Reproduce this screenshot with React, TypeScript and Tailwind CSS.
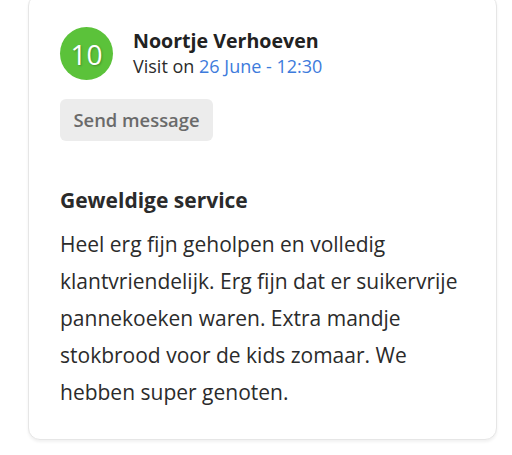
import React from 'react';

const review = {
  score: 10,
  name: 'Noortje Verhoeven',
  visit: '26 June - 12:30',
  title: 'Geweldige service',
  body: 'Heel erg fijn geholpen en volledig klantvriendelijk. Erg fijn dat er suikervrije pannekoeken waren. Extra mandje stokbrood voor de kids zomaar. We hebben super genoten.',
};

const ScoreBadge: React.FC<{ score: number }> = ({ score }) => (
  <div className="flex h-[53px] w-[53px] shrink-0 items-center justify-center rounded-full bg-[#5bc23a]">
    <span className="text-[28px] leading-none text-white [text-shadow:1px_1px_2px_rgba(0,0,0,0.25)]">{score}</span>
  </div>
);

export default function App() {
  return (
    <div className="min-h-[455px] bg-white font-['Open_Sans',sans-serif] text-[#2b2b2b]">
      <div className="ml-[28px] -mt-[6px] w-[469px] rounded-[12px] border border-[#e6e6e6] bg-white px-[31px] pt-[32px] pb-[28px] shadow-[0_2px_3px_rgba(0,0,0,0.06)]">
        <div className="flex items-center gap-[20px]">
          <ScoreBadge score={review.score} />
          <div className="flex flex-col">
            <span className="text-[19.6px] font-bold leading-[26px] text-[#222]">{review.name}</span>
            <span className="text-[18px] leading-[25px]">
              Visit on <span className="text-[#3d7bdc]">{review.visit}</span>
            </span>
          </div>
        </div>

        <button className="mt-[19px] h-[42px] w-[153px] rounded-[6px] bg-[#ececec] text-[18.4px] font-semibold text-[#6a6a6a]">
          Send message
        </button>

        <h3 className="mt-[45px] text-[21px] font-bold leading-[28px]">{review.title}</h3>
        <p className="mt-[12px] text-[21px] leading-[37px]">{review.body}</p>
      </div>
    </div>
  );
}
